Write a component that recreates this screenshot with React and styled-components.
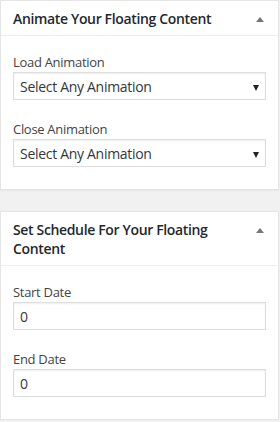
import React from 'react';
import styled, { createGlobalStyle } from 'styled-components';

const GlobalStyle = createGlobalStyle`
  html, body {
    margin: 0;
    padding: 0;
    background: #f1f1f1;
  }
  body {
    font-family: "Open Sans", "Liberation Sans", sans-serif;
    color: #23282d;
  }
`;

const Column = styled.div`
  width: 279px;
  display: flex;
  flex-direction: column;
  gap: 21px;
`;

const Box = styled.section`
  background: #fff;
  border: 1px solid #e5e5e5;
  box-shadow: 0 1px 1px rgba(0, 0, 0, 0.04);
`;

const Header = styled.div`
  display: flex;
  align-items: flex-start;
  justify-content: space-between;
  padding: 8px 12px 7px 12px;
  border-bottom: 1px solid #eee;
`;

const Title = styled.h2`
  margin: 0;
  font-size: 14px;
  line-height: 19px;
  font-weight: 600;
  letter-spacing: -0.35px;
  color: #23282d;
  max-width: 220px;
`;

const Toggle = styled.span`
  width: 0;
  height: 0;
  margin: 8px 2px 0 0;
  border-left: 4px solid transparent;
  border-right: 4px solid transparent;
  border-bottom: 5px solid #72777c;
`;

const Body = styled.div`
  display: flex;
  flex-direction: column;
  gap: 20px;
  padding: 17px 12px 22px 12px;
`;

const Field = styled.div`
  display: flex;
  flex-direction: column;
  gap: 1px;
`;

const Label = styled.label`
  font-size: 13px;
  line-height: 18px;
  letter-spacing: -0.3px;
  color: #444;
`;

const Control = styled.div`
  position: relative;
  height: 28px;
  box-sizing: border-box;
  border: 1px solid #ddd;
  box-shadow: inset 0 1px 2px rgba(0, 0, 0, 0.07);
  background: #fff;
  display: flex;
  align-items: center;
  padding: 0 6px;
  font-size: 14px;
  letter-spacing: -0.3px;
  color: #32373c;
`;

const Arrow = styled.span`
  position: absolute;
  right: 6px;
  top: 12px;
  width: 0;
  height: 0;
  border-left: 3.5px solid transparent;
  border-right: 3.5px solid transparent;
  border-top: 6px solid #222;
`;

const Select = ({ value }) => (
  <Control>
    {value}
    <Arrow />
  </Control>
);

const MetaBox = ({ title, children }) => (
  <Box>
    <Header>
      <Title>{title}</Title>
      <Toggle />
    </Header>
    <Body>{children}</Body>
  </Box>
);

export default function App() {
  return (
    <>
      <GlobalStyle />
      <Column>
        <MetaBox title="Animate Your Floating Content">
          <Field>
            <Label>Load Animation</Label>
            <Select value="Select Any Animation" />
          </Field>
          <Field>
            <Label>Close Animation</Label>
            <Select value="Select Any Animation" />
          </Field>
        </MetaBox>
        <MetaBox title="Set Schedule For Your Floating Content">
          <Field>
            <Label>Start Date</Label>
            <Control>0</Control>
          </Field>
          <Field>
            <Label>End Date</Label>
            <Control>0</Control>
          </Field>
        </MetaBox>
      </Column>
    </>
  );
}
